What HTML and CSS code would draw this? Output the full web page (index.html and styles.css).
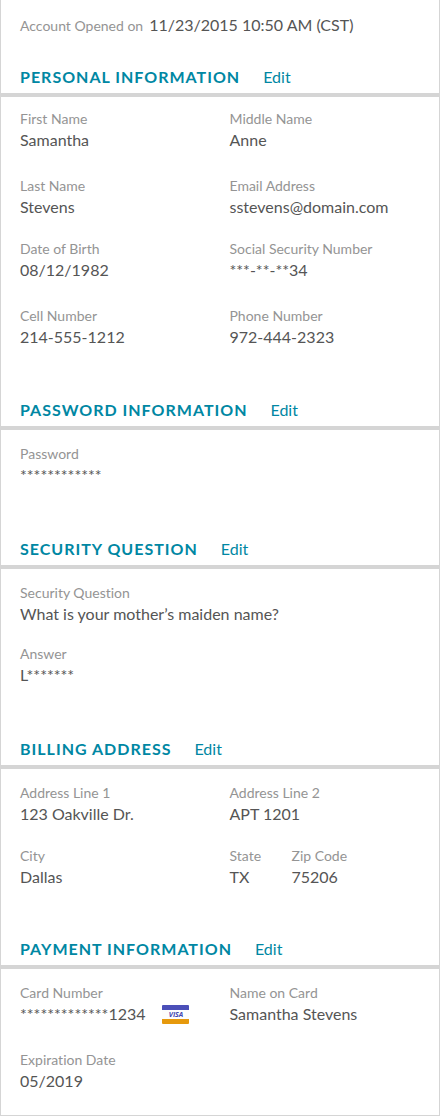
FILE: index.html
```html
<!DOCTYPE html>
<html lang="en">
  <head>
    <meta charset="UTF-8" />
    <meta name="viewport" content="width=device-width, initial-scale=1.0" />
    <title>My Account</title>
    <link rel="stylesheet" href="styles.css">
  </head>
  <body>
    <main class="account">
      <dl class="opened">
        <dt>Account Opened on</dt>
        <dd>11/23/2015 10:50 AM (CST)</dd>
      </dl>

      <section>
        <div class="section-header">
          <h2>PERSONAL INFORMATION</h2>
          <a href="#personal">Edit</a>
        </div>
        <dl class="fields compact" id="personal">
          <div class="row spaced">
            <div><dt>First Name</dt><dd>Samantha</dd></div>
            <div><dt>Middle Name</dt><dd>Anne</dd></div>
          </div>
          <div class="row">
            <div><dt>Last Name</dt><dd>Stevens</dd></div>
            <div><dt>Email Address</dt><dd>sstevens@domain.com</dd></div>
          </div>
          <div class="row spaced">
            <div><dt>Date of Birth</dt><dd>08/12/1982</dd></div>
            <div><dt>Social Security Number</dt><dd>***-**-**34</dd></div>
          </div>
          <div class="row">
            <div><dt>Cell Number</dt><dd>214-555-1212</dd></div>
            <div><dt>Phone Number</dt><dd>972-444-2323</dd></div>
          </div>
        </dl>
      </section>

      <section>
        <div class="section-header">
          <h2>PASSWORD INFORMATION</h2>
          <a href="#password">Edit</a>
        </div>
        <dl class="fields" id="password">
          <div><dt>Password</dt><dd>************</dd></div>
        </dl>
      </section>

      <section>
        <div class="section-header">
          <h2>SECURITY QUESTION</h2>
          <a href="#security">Edit</a>
        </div>
        <dl class="fields" id="security">
          <div class="row single">
            <div><dt>Security Question</dt><dd>What is your mother’s maiden name?</dd></div>
          </div>
          <div><dt>Answer</dt><dd>L*******</dd></div>
        </dl>
      </section>

      <section>
        <div class="section-header">
          <h2>BILLING ADDRESS</h2>
          <a href="#billing">Edit</a>
        </div>
        <dl class="fields" id="billing">
          <div class="row">
            <div><dt>Address Line 1</dt><dd>123 Oakville Dr.</dd></div>
            <div><dt>Address Line 2</dt><dd>APT 1201</dd></div>
          </div>
          <div class="row region">
            <div><dt>City</dt><dd>Dallas</dd></div>
            <div><dt>State</dt><dd>TX</dd></div>
            <div><dt>Zip Code</dt><dd>75206</dd></div>
          </div>
        </dl>
      </section>

      <section>
        <div class="section-header">
          <h2>PAYMENT INFORMATION</h2>
          <a href="#payment">Edit</a>
        </div>
        <dl class="fields" id="payment">
          <div class="row spaced">
            <div>
              <dt>Card Number</dt>
              <dd class="card-number">
                *************1234
                <svg class="visa" viewBox="0 0 27 19" role="img" aria-label="Visa">
                  <rect width="27" height="19" rx="1" fill="#fdfdfd" />
                  <path d="M0 5V1a1 1 0 0 1 1-1h25a1 1 0 0 1 1 1v4z" fill="#4b4fb8" />
                  <path d="M0 14h27v4a1 1 0 0 1-1 1H1a1 1 0 0 1-1-1z" fill="#e6990c" />
                  <text x="14" y="12" text-anchor="middle">VISA</text>
                </svg>
              </dd>
            </div>
            <div><dt>Name on Card</dt><dd>Samantha Stevens</dd></div>
          </div>
          <div><dt>Expiration Date</dt><dd>05/2019</dd></div>
        </dl>
      </section>
    </main>
  </body>
</html>
```

FILE: styles.css
```css
* {
  box-sizing: border-box;
}

body {
  margin: 0;
  background-color: #fff;
  font-family: Lato, sans-serif;
  font-variant-ligatures: none;
  color: #555;
}

h2,
dl,
dd {
  margin: 0;
}

.account {
  border: 1px solid #d5d5d5;
  border-top: 0;
  padding: 14px 0 22px;
}

dt {
  font-size: 14px;
  line-height: 20px;
  color: #949494;
}

dd {
  font-size: 16px;
  line-height: 22px;
}

.opened {
  display: flex;
  align-items: baseline;
  gap: 6px;
  padding-left: 19px;
  margin-bottom: 29px;
}

section + section {
  margin-top: 50px;
}

section:last-child {
  margin-top: 48px;
}

.section-header {
  display: flex;
  align-items: baseline;
  gap: 23px;
  padding: 0 19px 4px;
  border-bottom: 4px solid #d5d5d5;
  line-height: 24px;
  color: #0087a3;
}

.section-header h2 {
  font-size: 16px;
  font-weight: 700;
  letter-spacing: 1px;
}

.section-header a {
  font-size: 16px;
  color: inherit;
  text-decoration: none;
}

.section-header a:hover {
  text-decoration: underline;
}

.fields {
  padding: 14px 0 1px 19px;
}

.fields.compact {
  padding-top: 12px;
  padding-bottom: 0;
}

.row {
  display: grid;
  grid-template-columns: 1fr 1fr;
}

.row:not(:last-child) {
  margin-bottom: 21px;
}

.row.spaced {
  margin-bottom: 25px;
}

.row.single {
  grid-template-columns: 1fr;
  margin-bottom: 19px;
}

.row.region {
  grid-template-columns: 50% 62px 1fr;
}

.card-number {
  display: flex;
  align-items: center;
  gap: 16px;
}

.visa {
  width: 27px;
  height: 19px;
}

.visa text {
  font: italic 700 7px "Open Sans", sans-serif;
  fill: #4246b0;
}
```
